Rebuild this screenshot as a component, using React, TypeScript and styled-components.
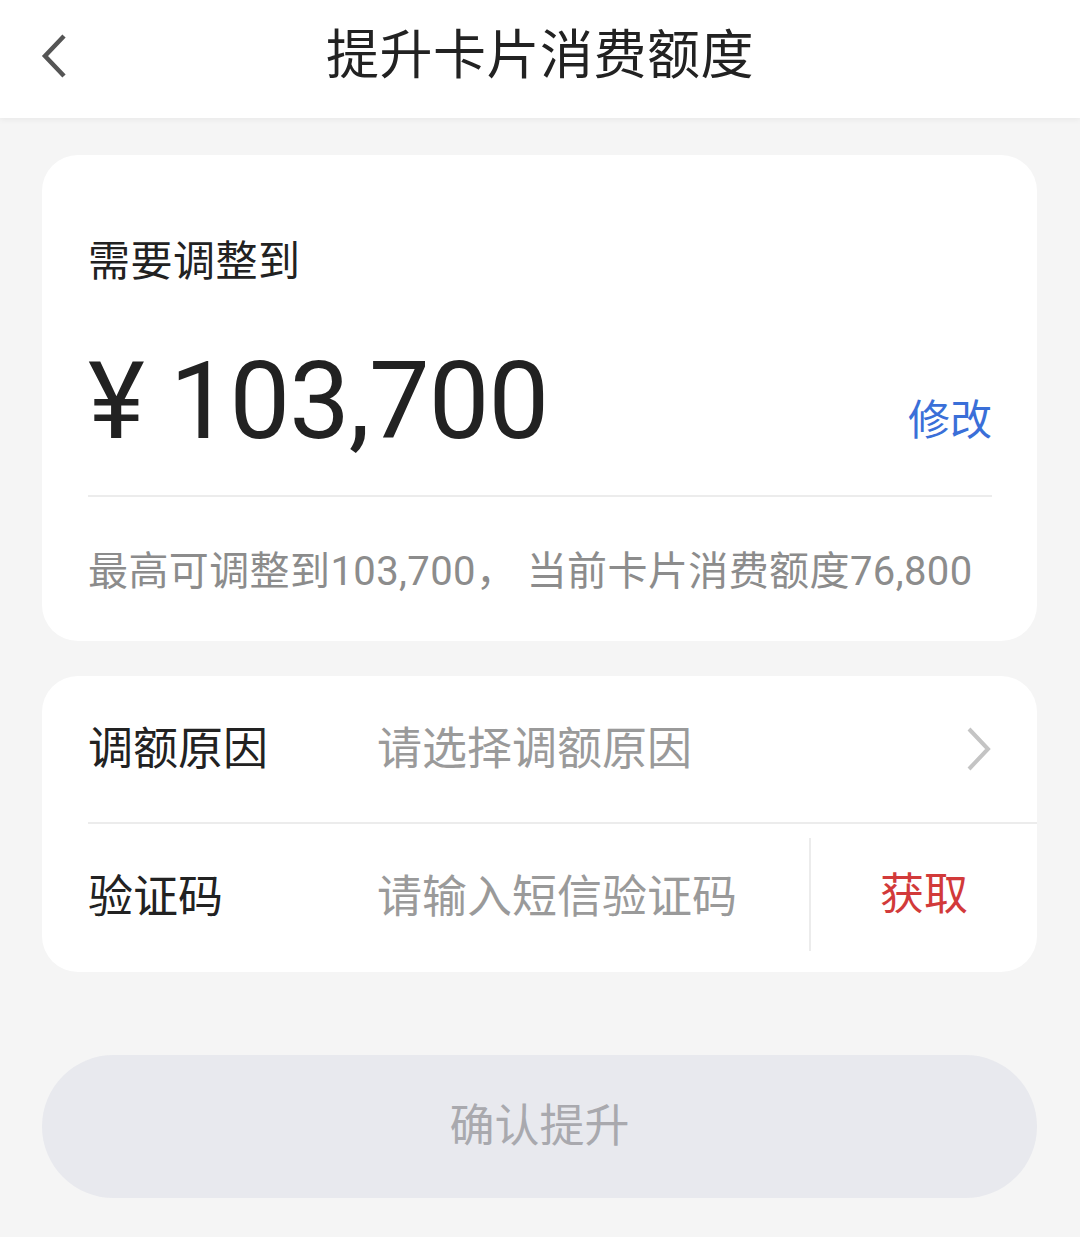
import styled, { createGlobalStyle } from "styled-components";

const GlobalStyle = createGlobalStyle`
  html, body {
    margin: 0;
    padding: 0;
    background: #f5f5f5;
  }
  body {
    font-family: Roboto, "Noto Sans CJK SC", "Noto Sans", sans-serif;
    color: #222;
  }
`;

const Page = styled.div`
  width: 1080px;
  min-height: 1237px;
  background: #f5f5f5;
`;

const Header = styled.header`
  position: relative;
  z-index: 1;
  height: 118px;
  background: #fff;
  display: grid;
  grid-template-columns: 120px 1fr 120px;
  align-items: center;
  box-shadow: 0 2px 6px rgba(0, 0, 0, 0.05);
`;

const BackButton = styled.button`
  border: none;
  background: none;
  padding: 0 0 6px 40px;
  display: flex;
  align-items: center;
  cursor: pointer;
`;

const Title = styled.h1`
  margin: 0 0 6px;
  text-align: center;
  font-size: 53px;
  font-weight: 400;
  line-height: 1;
  color: #222;
  letter-spacing: 0.5px;
`;

const Content = styled.main`
  padding: 37px 43px 0 42px;
  display: flex;
  flex-direction: column;
`;

const Card = styled.section<{ $gap?: number }>`
  background: #fff;
  border-radius: 36px;
  margin-bottom: ${(p) => p.$gap ?? 0}px;
  overflow: hidden;
`;

const AmountCard = styled(Card)`
  padding: 0 45px 41px 46px;
`;

const Label = styled.div`
  margin-top: 77px;
  font-size: 42px;
  line-height: 60px;
  color: #222;
  letter-spacing: 0.5px;
`;

const AmountRow = styled.div`
  margin-top: 55px;
  display: flex;
  align-items: baseline;
  justify-content: space-between;
  padding-bottom: 40px;
  border-bottom: 2px solid #ececec;
`;

const Amount = styled.div`
  font-family: Roboto, "Noto Sans", sans-serif;
  font-size: 108px;
  line-height: 108px;
  color: #222;
  letter-spacing: -1px;
`;

const Currency = styled.span`
  margin-right: 26px;
`;

const EditLink = styled.a`
  position: relative;
  top: -3px;
  font-size: 42px;
  color: #3a6fd8;
  text-decoration: none;
  cursor: pointer;
`;

const Hint = styled.div`
  margin-top: 47px;
  font-size: 40px;
  line-height: 56px;
  color: #8c8c8c;
  white-space: nowrap;
  letter-spacing: 0.4px;
`;

const FormRow = styled.div<{ $divider?: boolean; $lift?: number }>`
  height: 148px;
  box-sizing: border-box;
  margin-left: 46px;
  padding-bottom: ${(p) => p.$lift ?? 0}px;
  display: flex;
  align-items: center;
  border-bottom: ${(p) => (p.$divider ? "2px solid #ececec" : "none")};
`;

const FieldLabel = styled.div`
  width: 289px;
  flex-shrink: 0;
  font-size: 45px;
  line-height: 1;
  color: #222;
`;

const Placeholder = styled.div`
  flex: 1;
  font-size: 45px;
  line-height: 1;
  color: #9a9a9a;
`;

const ChevronWrap = styled.div`
  padding-right: 44px;
  display: flex;
  align-items: center;
`;

const CodeButton = styled.button`
  align-self: stretch;
  width: 228px;
  margin: 14px 0 19px;
  border: none;
  border-left: 2px solid #ececec;
  background: none;
  font-family: inherit;
  font-size: 44px;
  line-height: 1;
  color: #d23a3a;
  cursor: pointer;
  padding: 0;
`;

const SubmitButton = styled.button`
  margin-top: 83px;
  height: 143px;
  border: none;
  border-radius: 72px;
  background: #e8e9ee;
  font-family: inherit;
  font-size: 45px;
  line-height: 1;
  padding: 0;
  color: #a9a9ae;
  cursor: not-allowed;
`;

function BackIcon() {
  return (
    <svg width="30" height="46" viewBox="0 0 30 46">
      <path d="M24 3 L5 23 L24 43" fill="none" stroke="#555" strokeWidth="4.5" />
    </svg>
  );
}

function ChevronIcon() {
  return (
    <svg width="28" height="46" viewBox="0 0 28 46">
      <path d="M4 3 L23 23 L4 43" fill="none" stroke="#c4c4c4" strokeWidth="4" />
    </svg>
  );
}

export default function App() {
  return (
    <Page>
      <GlobalStyle />
      <Header>
        <BackButton aria-label="返回">
          <BackIcon />
        </BackButton>
        <Title>提升卡片消费额度</Title>
        <div />
      </Header>

      <Content>
        <AmountCard $gap={35}>
          <Label>需要调整到</Label>
          <AmountRow>
            <Amount>
              <Currency>¥</Currency>103,700
            </Amount>
            <EditLink>修改</EditLink>
          </AmountRow>
          <Hint>最高可调整到103,700，&nbsp;当前卡片消费额度76,800</Hint>
        </AmountCard>

        <Card>
          <FormRow $divider>
            <FieldLabel>调额原因</FieldLabel>
            <Placeholder>请选择调额原因</Placeholder>
            <ChevronWrap>
              <ChevronIcon />
            </ChevronWrap>
          </FormRow>
          <FormRow $lift={2}>
            <FieldLabel>验证码</FieldLabel>
            <Placeholder>请输入短信验证码</Placeholder>
            <CodeButton>获取</CodeButton>
          </FormRow>
        </Card>

        <SubmitButton disabled>确认提升</SubmitButton>
      </Content>
    </Page>
  );
}
